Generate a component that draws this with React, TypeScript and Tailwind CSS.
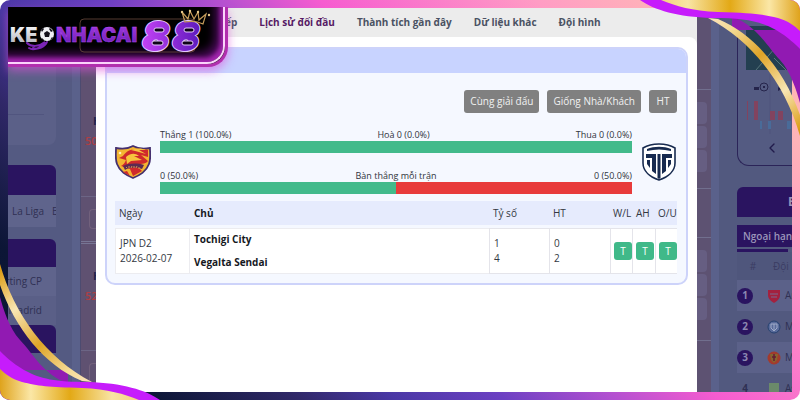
import { ChevronLeft } from "lucide-react";
import clsx from "clsx";

const tabs = [
  { label: "ếp" },
  { label: "Lịch sử đối đầu", active: true },
  { label: "Thành tích gần đây" },
  { label: "Dữ liệu khác" },
  { label: "Đội hình" },
];

const filters = ["Cùng giải đấu", "Giống Nhà/Khách", "HT"];

const stats = [
  { home: "Thắng 1 (100.0%)", middle: "Hoà 0 (0.0%)", away: "Thua 0 (0.0%)", share: 100 },
  { home: "0 (50.0%)", middle: "Bàn thắng mỗi trận", away: "0 (50.0%)", share: 50 },
];

const standings = [
  { rank: 1, name: "Arsenal", crest: "#a3213f" },
  { rank: 2, name: "Man City", crest: "#4a6fa5" },
  { rank: 3, name: "Man Utd", crest: "#a33a2c" },
  { rank: 4, name: "Aston", crest: "#6b8a6a" },
];

function SiteLogo() {
  return (
    <div className="absolute left-2 top-[7px] h-[60px] w-[220px] rounded-br-[20px] border-b-[3px] border-r-[3px] border-[#b22fae] bg-black shadow-[0_4px_10px_rgba(224,80,220,0.6)]">
      <div className="h-full w-full rounded-br-[18px] border-b-2 border-r-2 border-[#fbd3fb] bg-black shadow-[inset_-3px_-4px_4px_#a325ae,inset_-8px_-9px_10px_#4b0b5a]">
        <svg viewBox="0 0 215 55" className="h-[55px] w-[215px]" role="img" aria-label="KEONHACAI88">
          <defs>
            <linearGradient id="silver" x1="0" y1="0" x2="0" y2="1">
              <stop offset="0" stopColor="#ffffff" />
              <stop offset="1" stopColor="#a9a9b4" />
            </linearGradient>
            <linearGradient id="violet" x1="0" y1="0" x2="0" y2="1">
              <stop offset="0" stopColor="#a43be0" />
              <stop offset="1" stopColor="#6a1cb4" />
            </linearGradient>
            <linearGradient id="eights" gradientUnits="userSpaceOnUse" x1="136" y1="0" x2="196" y2="0">
              <stop offset="0" stopColor="#c041f4" />
              <stop offset="1" stopColor="#5716b8" />
            </linearGradient>
          </defs>
          <rect x="72" y="12" width="115" height="33" rx="4" fill="none" stroke="#6b4a3c" strokeWidth="0.8" />
          <g fontFamily="Inter, sans-serif" fontWeight="900">
            <text x="2" y="35" fontSize="20" fill="url(#silver)">KE</text>
            <text x="48" y="35" fontSize="20" fill="url(#violet)" stroke="#b44df0" strokeWidth="0.4">NHACAI</text>
            <g fontSize="38" fontStyle="italic" strokeLinejoin="round">
              <g fill="none" stroke="#e6c8ff" strokeWidth="4">
                <text x="135" y="43">8</text>
                <text x="165" y="43">8</text>
              </g>
              <g fill="url(#eights)" stroke="url(#eights)" strokeWidth="2">
                <text x="135" y="43">8</text>
                <text x="165" y="43">8</text>
              </g>
            </g>
            {/* open the counters of both eights */}
            <g fill="#0d0416" stroke="#e6c8ff" strokeWidth="1">
              <rect x="146" y="21" width="10" height="4" rx="2" />
              <rect x="144" y="34" width="11" height="4" rx="2" />
              <rect x="176" y="21" width="10" height="4" rx="2" />
              <rect x="174" y="34" width="11" height="4" rx="2" />
            </g>
          </g>
          <circle cx="39" cy="27" r="7" fill="#f0f0f4" />
          <path d="M39 24l3 2-1 4h-4l-1-4zM33 23l2-2 1 1-2 3zM42 21l3 3-2 1-2-3zM34 31l2 2-2 0zM42 33l2-3 1 1z" fill="#15121c" />
          <path d="M19 36c4 4 12 4 18-1-3 6-12 9-16 6M25 41c5 2 12-1 14-6" fill="none" stroke="#7b24b5" strokeWidth="2" strokeLinecap="round" />
          <path d="M177 15L174 5l6 7 2-8 4 8 4-7 1 8 7-6-3 10c-6-3-12-3-18-2z" fill="none" stroke="#c39a5a" strokeWidth="1.2" />
          <g fill="#e8c88a">
            <circle cx="174" cy="5" r="1.2" />
            <circle cx="182" cy="4" r="1.2" />
            <circle cx="190" cy="5" r="1.2" />
            <circle cx="201" cy="8" r="1.2" />
          </g>
        </svg>
      </div>
    </div>
  );
}

// gold and violet ribbon for a corner, drawn for the top right
function CornerRibbon({ className }: { className: string }) {
  return (
    <svg viewBox="0 0 180 140" className={clsx("pointer-events-none absolute h-[140px] w-[180px]", className)} aria-hidden="true">
      <defs>
        <linearGradient id="gold" gradientUnits="userSpaceOnUse" x1="40" y1="0" x2="180" y2="0">
          <stop offset="0" stopColor="#f3d47c" />
          <stop offset="0.2" stopColor="#f8e4a4" />
          <stop offset="0.5" stopColor="#e3a916" />
          <stop offset="0.78" stopColor="#fbe7a6" />
          <stop offset="1" stopColor="#dfa31c" />
        </linearGradient>
        <linearGradient id="goldLine" gradientUnits="userSpaceOnUse" x1="90" y1="18" x2="180" y2="130">
          <stop offset="0" stopColor="#fbe2b8" />
          <stop offset="0.15" stopColor="#f5dc98" />
          <stop offset="0.42" stopColor="#dfa427" />
          <stop offset="0.72" stopColor="#f8e6b4" />
          <stop offset="1" stopColor="#dc9c14" />
        </linearGradient>
      </defs>
      <path d="M112 17C136 24 148 48 160 60C171 72 177 92 180 103V30H112z" fill="#911ab2" />
      <path d="M20 0C34 10 58 17 92 18C124 18 140 21 156 30C168 37 176 45 180 49V0z" fill="#c61cfb" />
      <path d="M41 0C56 6 72 11 98 12C132 13 142 14 158 18C168 21 175 26 180 31V0z" fill="url(#gold)" />
      <path d="M88 18L98 19C136 35 165 72 180 115V136C166 86 134 42 88 18z" fill="url(#goldLine)" />
    </svg>
  );
}

function VegaltaCrest() {
  return (
    <svg viewBox="0 0 36 34" className="h-[34px] w-9 shrink-0" role="img" aria-label="Vegalta Sendai">
      <path d="M18 1C13 4 7 4 1 3C1 9 0 14 2 19C5 27 11 30 18 33C25 30 31 27 34 19C36 14 35 9 35 3C29 4 23 4 18 1z" fill="#f3b531" stroke="#45306f" strokeWidth="1.8" />
      <path d="M8 11C12 4 22 2 33 5V12L26 10L33 16C30 20 25 18 21 20L27 26L18 31L15 24L6 21C8 20 10 18 11 15L4 13z" fill="#cf2a2c" />
      <path d="M16 5c5-2 11-2 15 0l-7 0 7 4c-5-1-9-3-15-4zM11 12c5-4 9-4 13-1l-5 0 8 4-11 1-4 3z" fill="#f7c53d" />
      <path d="M8 21c6-3 14-3 21-1l-2 4c-6-2-12-2-17 1z" fill="#5b2b52" />
      <path d="M11 23l1-1m2 1v-2m2 2l1-2m2 2v-2m2 2l1-2m2 3v-2" stroke="#e9b450" strokeWidth="0.8" />
      <path d="M8 27l4-1 3 5z" fill="#cf2a2c" />
      <circle cx="5" cy="8" r="1.3" fill="#fff0bb" />
    </svg>
  );
}

function TochigiCrest() {
  return (
    <svg viewBox="0 0 36 38" className="h-[38px] w-9 shrink-0" role="img" aria-label="Tochigi City">
      <path d="M18 1C13 1 7 2 2 5V20C2 28 9 34 18 37C27 34 34 28 34 20V5C29 2 23 1 18 1z" fill="#fff" stroke="#172a4f" strokeWidth="1.6" />
      <path d="M6 6C13 3 23 3 30 6V8C22 6 14 6 6 8z" fill="#172a4f" />
      <path d="M5 11H15V31L11 28V15H5zM16.5 11H19.5V35L18 36L16.5 35zM21 11H31V15H25V28L21 31z" fill="#172a4f" />
      <path d="M6 17h3v8l-3-4zM27 17h3v4l-3 4z" fill="#172a4f" />
    </svg>
  );
}

function LeftPage() {
  return (
    <div className="flex overflow-hidden bg-[#545a82]" aria-hidden="true">
      <div className="w-12 text-[10px] text-[#2f3053]">
        <div className="h-[137px] rounded-br-lg bg-[#5b6088] pt-[106px]">
          <div className="mr-3 border-t border-[#51557f]" />
        </div>
        <div className="mt-5 h-[30px] rounded-tr-md bg-[#2a1460]" />
        <div className="flex h-8 items-center gap-2 overflow-hidden whitespace-nowrap bg-[#5f648c] pl-1">
          <span>La Liga</span>
          <span>B</span>
        </div>
        <div className="mt-3 h-7 rounded-tr-md bg-[#2a1460]" />
        <div className="flex h-[29px] items-center justify-end whitespace-nowrap bg-[#5f648c] pr-3.5">rting CP</div>
        <div className="flex h-[29px] items-center justify-end whitespace-nowrap bg-[#5a5f87] pr-3.5">l Madrid</div>
        <div className="h-7 rounded-tr-md bg-[#2a1460]" />
      </div>
      <div className="ml-4 w-2 bg-[#5a618b]" />
      <div className="flex-1 overflow-hidden border-l border-[#4c4b70] bg-[#5f5171] pl-1 text-[11px] leading-5">
        <div className="h-[188px] pt-[103px]">
          <p className="pl-2 font-bold text-[#21204a]">H</p>
          <p className="font-semibold text-[#ad3f45]">50</p>
        </div>
        <div className="-ml-1 border-b border-[#6c6585]" />
        <div className="ml-1 mt-3 h-5 rounded-l-sm border border-r-0 border-[#72617c]" />
        <div className="-ml-1 mt-3 h-[3px] border-y border-[#777594]" />
        <div className="h-[106px] pt-[22px]">
          <p className="pl-2 font-bold text-[#21204a]">H</p>
          <p className="font-semibold text-[#ad3f45]">52</p>
        </div>
        <div className="-ml-1 border-b border-[#6c6585]" />
        <div className="ml-1 mt-3 h-5 rounded-l-sm border border-r-0 border-[#72617c]" />
      </div>
    </div>
  );
}

function OddsBoxes() {
  return (
    <div className="mr-1 mt-3 flex flex-col gap-0.5">
      <div className="h-[22px] rounded-r-sm bg-[#665e82]" />
      <div className="h-[22px] rounded-r-sm bg-[#665e82]" />
      <div className="h-[22px] rounded-r-sm bg-[#665e82]" />
    </div>
  );
}

function RightPage() {
  return (
    <div className="flex overflow-hidden bg-[#52597f]" aria-hidden="true">
      <div className="w-3.5 shrink-0 bg-[#5d5272]">
        <div className="h-[82px] border-b border-[#716f8e]" />
        <OddsBoxes />
        <div className="mt-4 h-[50px] border-y border-[#716f8e]" />
        <OddsBoxes />
        <div className="mt-5 border-b border-[#716f8e]" />
      </div>
      <div className="w-2 shrink-0 bg-[#5a618b]" />
      <div className="ml-[18px] w-[60px] shrink-0">
        <div className="h-[158px] overflow-hidden rounded-bl-xl border-b border-l border-[#2b2458] bg-[#545b82]">
          <svg viewBox="0 0 60 132" className="h-[132px] w-[60px]">
            <path d="M8 18H60V62H8z" fill="#233f50" />
            <path d="M18 62L44 32M36 50l12 12" stroke="#56757a" strokeWidth="1" />
            <path d="M32 66v60M56 66v60" stroke="#4a5078" strokeWidth="0.6" />
            <circle cx="26" cy="79" r="4" fill="none" stroke="#25244b" strokeWidth="1" />
            <path d="M16 79h5v3h-5zM40 79l4 2-4 2zM25 78h2v2h-2z" fill="#25244b" />
            <path d="M9 93h1v19H9zM16 93h4v19h-4zM32 103h5v9h-5zM40 103h5v9h-5z" fill="#82435f" />
            <path d="M22 113h2v8h-2zM30 113h3v8h-3zM49 113h4v8h-4z" fill="#496b99" />
          </svg>
          <ChevronLeft className="ml-[26px] size-4 text-[#211b4b]" />
        </div>
        <div className="mt-[21px] flex h-[30px] items-center overflow-hidden rounded-tl-md bg-[#2a1460] pl-[51px] text-xs font-bold text-[#9a94b8]">B</div>
        <div className="mt-2 flex h-[22px] items-center overflow-hidden whitespace-nowrap bg-[#2a1460] pl-1.5 text-[10px] font-semibold text-[#9a96ba]">
          Ngoại hạng
        </div>
        <div className="mt-0.5 h-[3px] w-[51px] bg-[#2a1460]" />
        <table className="w-full table-fixed text-left text-[10px] text-[#2f3053]">
          <thead>
            <tr className="h-7 bg-[#4f567c] text-[#3b3c63]">
              <th className="w-8 text-center font-normal">#</th>
              <th className="pl-1 font-normal">Đội</th>
            </tr>
          </thead>
          <tbody>
            {standings.map((team) => (
              <tr key={team.rank} className="h-[31px] odd:bg-[#5b6189]">
                <td className="font-bold">
                  <span
                    className={clsx(
                      "flex size-4 items-center justify-center rounded-full",
                      team.rank < 4 ? "bg-[#2a1460] text-[#8d89b2]" : "text-[#2f3053]"
                    )}
                  >
                    {team.rank}
                  </span>
                </td>
                <td>
                  <div className="-ml-0.5 flex items-center gap-1 overflow-hidden whitespace-nowrap">
                    <svg viewBox="0 0 14 14" className="size-3.5 shrink-0">
                      {team.rank === 1 && <path d="M1 1h12v5c0 4-3 6-6 8-3-2-6-4-6-8z" fill={team.crest} />}
                      {team.rank === 1 && <path d="M3 5h8M4 8h6" stroke="#776b91" strokeWidth="1" />}
                      {team.rank === 2 && <circle cx="7" cy="7" r="6" fill="#596b9b" stroke="#26416f" strokeWidth="1" />}
                      {team.rank === 2 && <path d="M4 4h6v4l-3 3-3-3zM7 4v6" fill="none" stroke="#a0acc9" strokeWidth="1" />}
                      {team.rank === 3 && <circle cx="7" cy="7" r="6.5" fill={team.crest} />}
                      {team.rank === 3 && <path d="M3 3h8l-1 6-3 3-3-3z" fill="#86642f" />}
                      {team.rank === 3 && <path d="M7 3v7M5 6h4" stroke="#641d35" strokeWidth="1.5" />}
                      {team.rank === 4 && <path d="M2 1h10v12H2z" fill={team.crest} />}
                    </svg>
                    {team.name}
                  </div>
                </td>
              </tr>
            ))}
          </tbody>
        </table>
      </div>
    </div>
  );
}

function MatchTable() {
  return (
    <table className="mt-1 w-full table-fixed border-separate border-spacing-x-0 border-spacing-y-[3px] text-left text-[10px] leading-[15px] text-[#333842]">
      <thead>
        <tr className="h-6 bg-[#e6ebfd]">
          <th className="w-[75px] pl-1 font-normal">Ngày</th>
          <th className="pl-1 font-bold text-[#15181e]">Chủ</th>
          <th className="w-[60px] pl-1 font-normal">Tỷ số</th>
          <th className="w-[61px] pl-1 font-normal">HT</th>
          <th className="w-[22px] pl-[3px] font-normal">W/L</th>
          <th className="w-[23px] pl-1 font-normal">AH</th>
          <th className="w-[22px] pl-[3px] font-normal">O/U</th>
        </tr>
      </thead>
      <tbody>
        <tr className="h-[46px] bg-white">
          <td className="border border-[#ececf0] pl-1">
            <p>JPN D2</p>
            <p>2026-02-07</p>
          </td>
          <td className="border-y border-[#ececf0] pl-1 font-bold text-[#15181e]">
            <p className="mb-2">Tochigi City</p>
            <p>Vegalta Sendai</p>
          </td>
          <td className="border border-r-0 border-[#e4e4ea] pl-1">
            <p>1</p>
            <p>4</p>
          </td>
          <td className="border border-r-0 border-[#e4e4ea] pl-1">
            <p>0</p>
            <p>2</p>
          </td>
          {["W/L", "AH", "O/U"].map((col) => (
            <td key={col} className="border border-r-0 border-[#e4e4ea] pl-[3px]">
              <span className="flex size-[18px] items-center justify-center rounded-[3px] bg-[#40b989] text-white">T</span>
            </td>
          ))}
        </tr>
      </tbody>
    </table>
  );
}

function HeadToHead() {
  return (
    <section className="mx-[9px] mt-2.5 overflow-hidden rounded-[10px] border-2 border-[#cdd3fa] bg-[#f5f8ff]">
      <div className="h-6 bg-[#c8d3ff]" />
      <div className="pb-1.5 pl-2 pr-[9px] pt-[17px]">
        <div className="flex justify-end gap-2">
          {filters.map((f) => (
            <button key={f} type="button" className="h-[23px] min-w-7 rounded-[3px] bg-[#808080] px-1.5 text-[10px] text-[#f1f1f1]">
              {f}
            </button>
          ))}
        </div>
        <div className="mt-4 flex items-center gap-[9px]">
          <VegaltaCrest />
          <div className="flex flex-1 flex-col gap-[17px] text-[9px] leading-3 text-[#30343c]">
            {stats.map((s) => (
              <div key={s.middle}>
                <div className="flex justify-between">
                  <span>{s.home}</span>
                  <span>{s.middle}</span>
                  <span>{s.away}</span>
                </div>
                <div className="h-3 bg-[#e83b3b]">
                  <div className="h-full bg-[#42ba8b]" style={{ width: `${s.share}%` }} />
                </div>
              </div>
            ))}
          </div>
          <TochigiCrest />
        </div>
        <MatchTable />
      </div>
    </section>
  );
}

export default function App() {
  return (
    <div className="relative flex h-screen overflow-hidden rounded-[10px] bg-[linear-gradient(45deg,#0a1433_0%,#0c1636_13%,#302868_25%,#4a38a5_33%,#6b40c2_42%,#b050d0_51%,#f65cd0_60%,#ff9cc4_78%,#ffb3b8_88%,#ffbcae_100%)] p-2 font-['Open_Sans','Noto_Sans',sans-serif]">
      <div className="grid flex-1 grid-cols-[88px_1fr_95px] grid-rows-[minmax(0,1fr)]">
        <LeftPage />
        <main className="flex min-w-0 flex-col bg-[#ececec]">
          <nav className="flex h-[29px] items-center gap-[22px] whitespace-nowrap pl-[129px] text-[10px] font-bold text-[#4a5263]">
            {tabs.map((tab) => (
              <a key={tab.label} href="#" className={clsx(tab.active && "text-[#561a64]")}>
                {tab.label}
              </a>
            ))}
          </nav>
          <div className="flex-1 rounded-t-lg bg-white">
            <HeadToHead />
          </div>
        </main>
        <RightPage />
      </div>
      <SiteLogo />
      <CornerRibbon className="right-0 top-0" />
      <CornerRibbon className="bottom-0 left-0 rotate-180" />
    </div>
  );
}
